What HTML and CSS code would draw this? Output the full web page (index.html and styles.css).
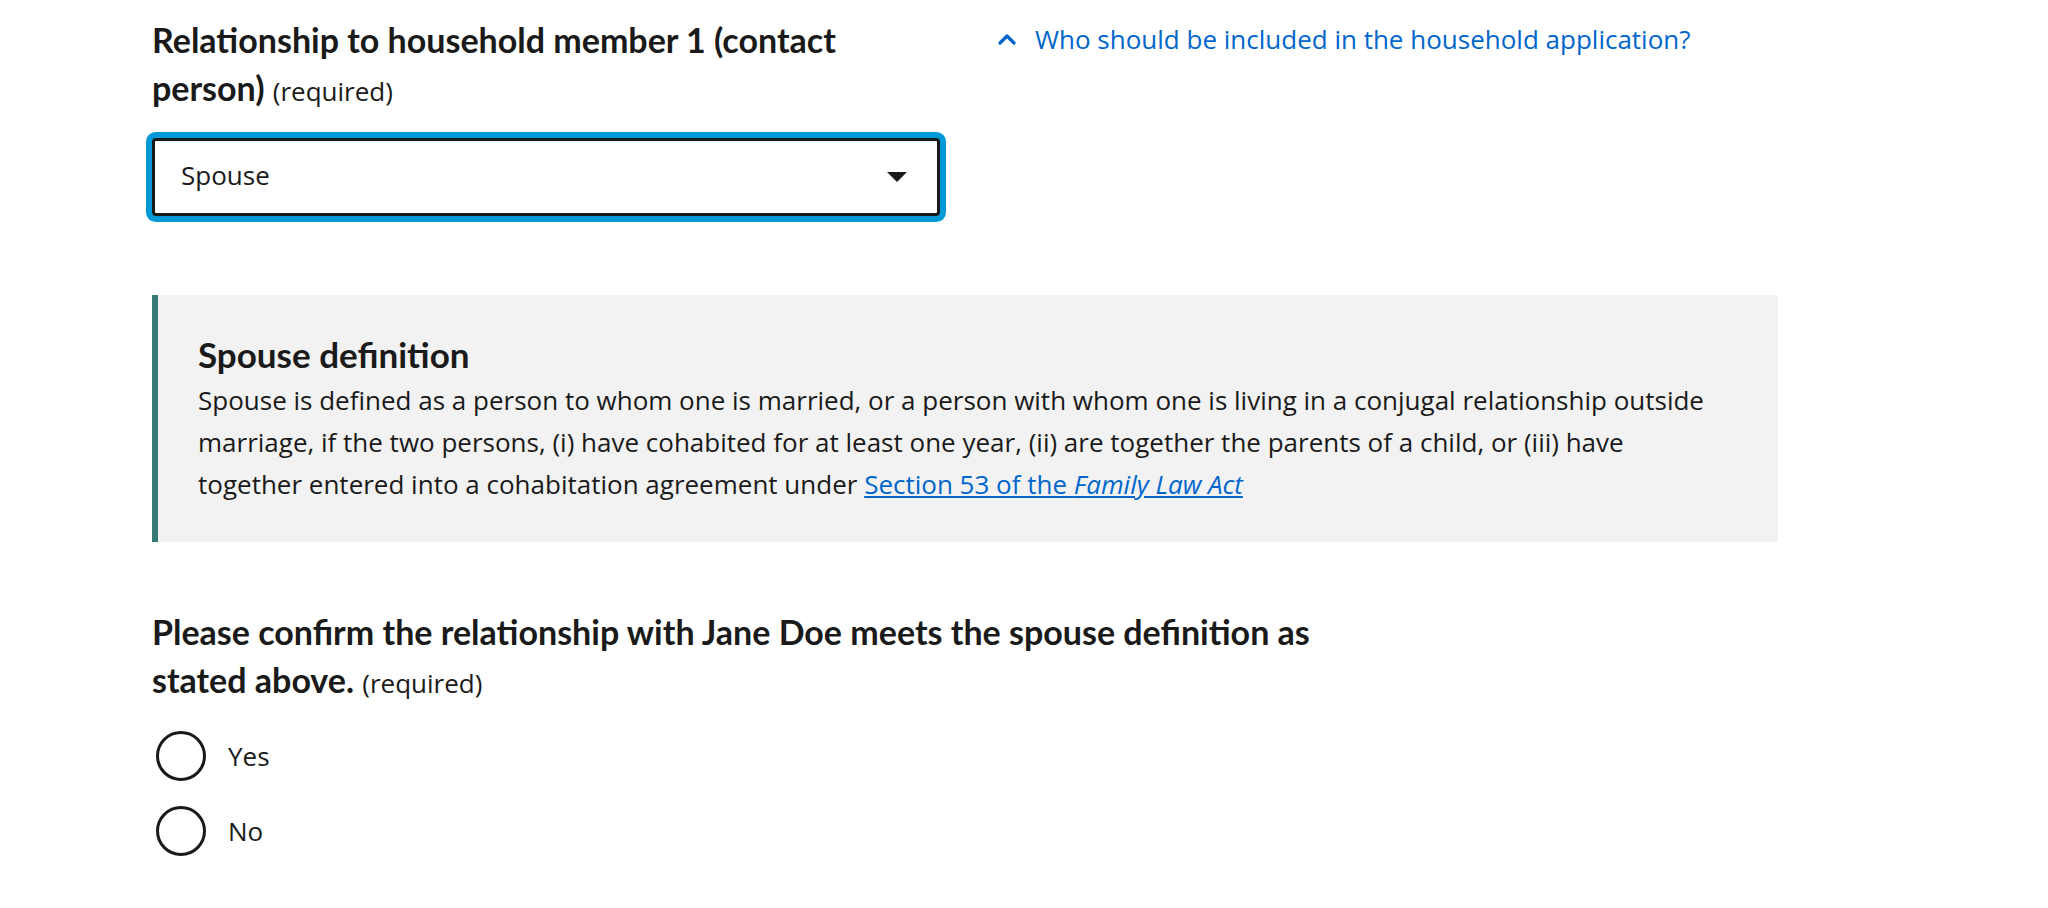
FILE: index.html
```html
<!DOCTYPE html>
<html lang="en">
<head>
<meta charset="utf-8">
<title>Household relationship</title>
<link rel="stylesheet" href="styles.css">
</head>
<body>
<main class="page">
  <div class="top-row">
    <div class="field">
      <label class="label" for="relationship">Relationship to household member 1 (contact person) <span class="req">(required)</span></label>
      <div class="select" id="relationship">
        <span class="select-value">Spouse</span>
        <svg class="select-arrow" width="20" height="10" viewBox="0 0 20 10" aria-hidden="true"><polygon points="0,0 20,0 10,10" fill="#1a1a1a"/></svg>
      </div>
    </div>
    <a class="hint-link" href="#">
      <svg class="chevron" width="20" height="12" viewBox="0 0 20 12" aria-hidden="true"><polyline points="3,10 10,3 17,10" fill="none" stroke="#0066cc" stroke-width="3.2" stroke-linecap="round" stroke-linejoin="round"/></svg>
      <span>Who should be included in the household application?</span>
    </a>
  </div>

  <section class="callout">
    <h2 class="callout-title">Spouse definition</h2>
    <p class="callout-text">Spouse is defined as a person to whom one is married, or a person with whom one is living in a conjugal relationship outside marriage, if the two persons, (i) have cohabited for at least one year, (ii) are together the parents of a child, or (iii) have together entered into a cohabitation agreement under <a href="#">Section 53 of the <em>Family Law Act</em></a></p>
  </section>

  <fieldset class="question">
    <legend class="question-label">Please confirm the relationship with Jane Doe meets the spouse definition as stated above. <span class="req">(required)</span></legend>
    <div class="radios">
      <label class="radio"><span class="radio-circle"></span><span class="radio-text">Yes</span></label>
      <label class="radio"><span class="radio-circle"></span><span class="radio-text">No</span></label>
    </div>
  </fieldset>
</main>
</body>
</html>
```

FILE: styles.css
```css
html, body {
  margin: 0;
  padding: 0;
  background: #ffffff;
}
body {
  font-family: "Open Sans", "Noto Sans", sans-serif;
  color: #1a1a1a;
  font-size: 26px;
  line-height: 42px;
}
.page {
  padding: 16px 0 40px 152px;
}
.top-row {
  display: flex;
  align-items: flex-start;
  gap: 59px;
}
.field {
  width: 788px;
  display: flex;
  flex-direction: column;
}
.label,
.question-label {
  font-family: "Lato", "Open Sans", sans-serif;
  font-weight: 700;
  font-size: 34px;
  line-height: 48px;
  color: #1a1a1a;
}
.label {
  max-width: 720px;
}
.req {
  font-family: "Open Sans", sans-serif;
  font-weight: 400;
  font-size: 26px;
}
.select {
  margin-top: 23px;
  box-sizing: border-box;
  height: 78px;
  border: 3px solid #1a1a1a;
  border-radius: 4px;
  box-shadow: 0 0 0 6px #0099d8;
  display: flex;
  align-items: center;
  justify-content: space-between;
  padding: 0 30px 4px 26px;
  background: #fff;
}
.select-value {
  font-size: 26px;
}
.select-arrow {
  margin-top: 4px;
}
.hint-link {
  display: flex;
  align-items: center;
  gap: 18px;
  color: #0066cc;
  text-decoration: none;
  font-size: 26px;
  padding-top: 2px;
  margin-left: -2px;
}
.chevron {
  display: block;
}
.callout {
  margin-top: 79px;
  width: 1626px;
  box-sizing: border-box;
  background: #f2f2f2;
  border-left: 6px solid #367a76;
  padding: 41px 40px 37px 40px;
}
.callout-title {
  margin: 0 0 7px 0;
  font-family: "Lato", "Open Sans", sans-serif;
  font-weight: 700;
  font-size: 35px;
  line-height: 36px;
}
.callout-text {
  margin: 0;
  max-width: 1522px;
}
.callout-text a {
  color: #0066cc;
  text-decoration: underline;
}
.question {
  margin: 66px 0 0 0;
  padding: 0;
  border: 0;
  min-width: 0;
}
.question-label {
  padding: 0;
  max-width: 1180px;
}
.radios {
  margin-top: 24px;
  display: flex;
  flex-direction: column;
  gap: 25px;
}
.radio {
  display: flex;
  align-items: center;
  gap: 22px;
}
.radio-circle {
  box-sizing: border-box;
  width: 50px;
  height: 50px;
  border: 3px solid #1a1a1a;
  border-radius: 50%;
  background: #fff;
  margin-left: 4px;
}
.radio-text {
  font-size: 26px;
}
```
